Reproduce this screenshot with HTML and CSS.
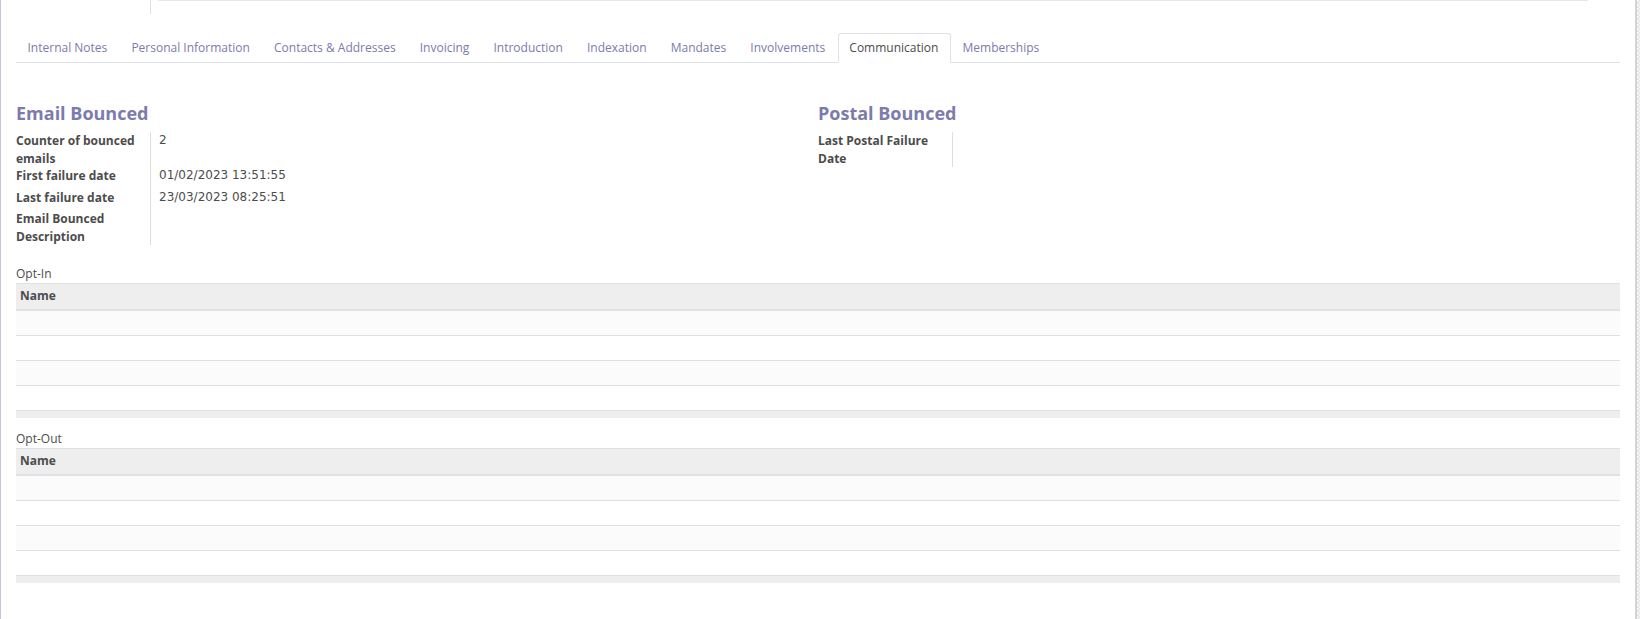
FILE: index.html
```html
<!DOCTYPE html>
<html lang="en">
<head>
<meta charset="utf-8">
<title>Communication</title>
<link rel="stylesheet" href="styles.css">
</head>
<body>
<div class="page">
  <div class="edge-left"></div>
  <main class="sheet">
    <div class="top-strip">
      <div class="ts-label"></div>
      <div class="ts-value"><div class="ts-input"></div></div>
    </div>

    <ul class="tabs">
      <li class="tab">Internal Notes</li>
      <li class="tab">Personal Information</li>
      <li class="tab">Contacts &amp; Addresses</li>
      <li class="tab">Invoicing</li>
      <li class="tab">Introduction</li>
      <li class="tab">Indexation</li>
      <li class="tab">Mandates</li>
      <li class="tab">Involvements</li>
      <li class="tab active">Communication</li>
      <li class="tab">Memberships</li>
    </ul>

    <section class="pane">
      <div class="groups">
        <div class="group">
          <h2 class="group-title">Email Bounced</h2>
          <table class="fields">
            <colgroup><col class="c-lbl"><col></colgroup>
            <tr><th>Counter of bounced emails</th><td>2</td></tr>
            <tr><th>First failure date</th><td>01/02/2023 13:51:55</td></tr>
            <tr><th>Last failure date</th><td>23/03/2023 08:25:51</td></tr>
            <tr><th>Email Bounced Description</th><td></td></tr>
          </table>
        </div>
        <div class="group">
          <h2 class="group-title">Postal Bounced</h2>
          <table class="fields">
            <colgroup><col class="c-lbl"><col></colgroup>
            <tr><th>Last Postal Failure Date</th><td></td></tr>
          </table>
        </div>
      </div>

      <div class="o2m o2m-first">
        <div class="o2m-label">Opt-In</div>
        <table class="list">
          <thead><tr><th>Name</th></tr></thead>
          <tbody>
            <tr><td><div class="cell"></div></td></tr>
            <tr><td><div class="cell"></div></td></tr>
            <tr><td><div class="cell"></div></td></tr>
            <tr><td><div class="cell"></div></td></tr>
          </tbody>
          <tfoot><tr><td><div class="foot"></div></td></tr></tfoot>
        </table>
      </div>

      <div class="o2m">
        <div class="o2m-label">Opt-Out</div>
        <table class="list">
          <thead><tr><th>Name</th></tr></thead>
          <tbody>
            <tr><td><div class="cell"></div></td></tr>
            <tr><td><div class="cell"></div></td></tr>
            <tr><td><div class="cell"></div></td></tr>
            <tr><td><div class="cell"></div></td></tr>
          </tbody>
          <tfoot><tr><td><div class="foot"></div></td></tr></tfoot>
        </table>
      </div>
    </section>
  </main>
  <div class="edge-right"></div>
</div>
</body>
</html>
```

FILE: styles.css
```css
* { box-sizing: border-box; }

html, body {
  margin: 0;
  padding: 0;
  background: #ffffff;
}

body {
  font-family: "Open Sans", "Liberation Sans", sans-serif;
  font-size: 12px;
  color: #4c4c4c;
}

.page {
  display: flex;
  min-height: 619px;
}

.edge-left {
  flex: none;
  width: 1px;
  background: #c9c6d8;
}

.sheet {
  flex: 1;
  min-width: 0;
  padding: 0 15px;
}

.edge-right {
  flex: none;
  width: 5px;
  border-left: 2px solid #d3d3d3;
  background: repeating-conic-gradient(#e4e4e4 0 25%, #f5f5f5 0 50%) 0 0 / 4px 4px;
}

/* remnant of the form above */
.top-strip {
  display: flex;
  height: 14px;
}

.ts-label {
  flex: none;
  width: 135px;
  border-right: 1px solid #e0e0e0;
}

.ts-value {
  flex: 1;
  padding: 0 32px 0 7px;
}

.ts-input {
  border-top: 1px solid #e8e8e8;
}

/* tabs */
.tabs {
  display: flex;
  list-style: none;
  margin: 19px 0 0;
  padding: 0;
  border-bottom: 1px solid #dee2e6;
}

.tab {
  padding: 5px 11.6px 5px 10.5px;
  line-height: 18px;
  border: 1px solid transparent;
  border-radius: 3px 3px 0 0;
  margin-bottom: -1px;
  color: #7c7bad;
  white-space: nowrap;
}

.tab.active {
  color: #4c4c4c;
  background: #ffffff;
  border-color: #dee2e6 #dee2e6 #ffffff;
}

/* groups */
.groups {
  display: grid;
  grid-template-columns: 1fr 1fr;
  margin-top: 39px;
}

.group-title {
  margin: 0 0 8px;
  font-size: 18px;
  line-height: 22px;
  font-weight: 700;
  color: #7c7bad;
}

.fields {
  width: 100%;
  table-layout: fixed;
  border-collapse: separate;
  border-spacing: 0;
}

.c-lbl { width: 134px; }

.fields th {
  padding: 0;
  text-align: left;
  vertical-align: top;
  font-weight: 700;
  line-height: 17.5px;
  color: #4c4c4c;
}

.fields td {
  padding: 0 0 0 8px;
  height: 21.5px;
  vertical-align: top;
  line-height: 17.5px;
  border-left: 1px solid #dedede;
  font-family: "DejaVu Sans", "Open Sans", sans-serif;
  font-size: 12px;
}

/* one2many lists */
.o2m { margin-top: 12px; }
.o2m-first { margin-top: 19.5px; }

.o2m-label {
  line-height: 18px;
}

.list {
  width: 100%;
  border-collapse: collapse;
}

.list th {
  background: #eeeeee;
  border-top: 1px solid #dee2e6;
  border-bottom: 2px solid #dee2e6;
  padding: 3px 4px 4px;
  line-height: 18px;
  text-align: left;
  font-weight: 700;
  color: #4c4c4c;
}

.list td {
  padding: 0;
}

.list tbody td {
  border-bottom: 1px solid #e0e0e4;
}

.list tbody tr:nth-child(odd) td {
  background: #fbfbfb;
}

.cell { height: 24px; }

.list tfoot td { background: #eeeeee; }

.foot { height: 7px; }
```
